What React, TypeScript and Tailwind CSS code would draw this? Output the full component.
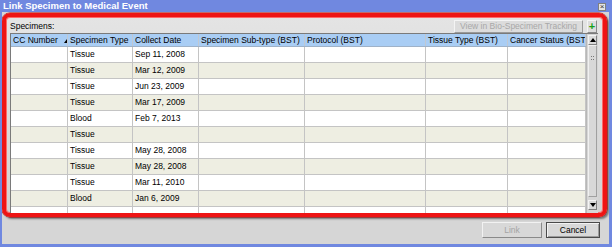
import React from "react";

const rows: [string, string][] = [
  ["Tissue", "Sep 11, 2008"],
  ["Tissue", "Mar 12, 2009"],
  ["Tissue", "Jun 23, 2009"],
  ["Tissue", "Mar 17, 2009"],
  ["Blood", "Feb 7, 2013"],
  ["Tissue", ""],
  ["Tissue", "May 28, 2008"],
  ["Tissue", "May 28, 2008"],
  ["Tissue", "Mar 11, 2010"],
  ["Blood", "Jan 6, 2009"],
  ["", ""],
];

const cols = [
  { name: "CC Number", w: "w-[57px]" },
  { name: "Specimen Type", w: "w-[65px]" },
  { name: "Collect Date", w: "w-[66px]" },
  { name: "Specimen Sub-type (BST)", w: "w-[106px]" },
  { name: "Protocol (BST)", w: "w-[121px]" },
  { name: "Tissue Type (BST)", w: "w-[82px]" },
  { name: "Cancer Status (BST)", w: "w-[78px]" },
];

function Tri({ down = false }: { down?: boolean }) {
  return (
    <svg width="6" height="4" viewBox="0 0 6 4">
      <polygon points={down ? "0,0 6,0 3,4" : "0,4 6,4 3,0"} fill="#000" />
    </svg>
  );
}

export default function App() {
  return (
    <div className="w-[612px] h-[247px] flex flex-col bg-[#d6d6d6] border-l-[2px] border-r-[3px] border-b-[3px] border-[#7088e0] overflow-hidden font-['Liberation_Sans',Arial,sans-serif] text-[8.5px] text-black">
      {/* Title bar */}
      <div className="h-[12px] -ml-[2px] -mr-[3px] bg-[#7088e0] flex items-center justify-between pl-[3px] pr-[6px]">
        <span className="text-white font-bold text-[9.5px] leading-none">Link Specimen to Medical Event</span>
        <span className="w-[8px] h-[8px] mt-[2px] bg-[#e4e4e4] border border-[#808080] flex items-center justify-center text-[8px] leading-none text-[#333]">
          ×
        </span>
      </div>

      {/* Highlighted panel */}
      <div className="mt-[1px] mr-[2px] h-[204px] rounded-[8px] border-[4px] border-[#ee1414] shadow-[0_0_0_0.5px_#b00000,2px_2px_2px_rgba(0,0,0,0.45),inset_0_0_0_1px_#ff6a6a] overflow-hidden bg-gradient-to-b from-[#e4e4e4] to-[#d2d2d2]">
        <div className="h-[16px] flex items-center pl-[4px] pr-[6px]">
          <span className="flex-1 pt-[2px]">Specimens:</span>
          <span className="h-[13px] w-[129px] flex items-center justify-center border border-t-[#f4f4f4] border-l-[#f4f4f4] border-r-[#9a9a9a] border-b-[#9a9a9a] bg-[#dcdcdc] text-[#a8a8a8] mt-[2px]">
            View in Bio-Specimen Tracking
          </span>
          <span className="ml-[4px] h-[13px] w-[10px] flex items-center justify-center border border-t-[#f4f4f4] border-l-[#f4f4f4] border-r-[#8a8a8a] border-b-[#8a8a8a] bg-[#dcdcdc] text-[#16a016] font-bold text-[11px] leading-none mt-[2px]">
            +
          </span>
        </div>

        {/* Table */}
        <div className="ml-[4px] mr-[5px] h-[180px] border-l border-t border-[#7a7a7a] flex overflow-hidden">
          <div className="w-[575px] flex flex-col">
            <div className="h-[13px] flex bg-[#a9cdf4] border-b border-[#9fb2c8] shrink-0">
              {cols.map((c, i) => (
                <div
                  key={c.name}
                  className={`${c.w} shrink-0 border-r border-[#c0c8d2] pl-[2px] flex items-center whitespace-nowrap overflow-hidden`}
                >
                  <span>{c.name}</span>
                  {i === 0 && (
                    <span className="ml-[6px] mt-[1px]">
                      <Tri />
                    </span>
                  )}
                </div>
              ))}
            </div>
            {rows.map((r, ri) => (
              <div
                key={ri}
                className={`h-[16px] flex shrink-0 border-b border-[#c4c4c4] ${ri % 2 === 1 ? "bg-[#eeeee2]" : "bg-white"}`}
              >
                {cols.map((c, ci) => (
                  <div
                    key={c.name}
                    className={`${c.w} shrink-0 border-r border-[#c4c4c4] pl-[2px] flex items-center whitespace-nowrap overflow-hidden`}
                  >
                    {ci === 1 ? r[0] : ci === 2 ? r[1] : ""}
                  </div>
                ))}
              </div>
            ))}
          </div>

          {/* Scrollbar */}
          <div className="w-[12px] flex flex-col bg-[#d6d6d6] border-l border-[#b8b8b8] pt-[1px] pb-[3px]">
            <div className="h-[10px] mx-[1px] flex items-center justify-center border border-t-[#f4f4f4] border-l-[#f4f4f4] border-r-[#808080] border-b-[#808080] bg-[#dadada]">
              <Tri />
            </div>
            <div className="flex-1 flex flex-col">
              <div className="h-[152px] mx-[1px] border border-t-[#f0f0f0] border-l-[#f0f0f0] border-r-[#a0a0a0] border-b-[#a0a0a0] bg-[#d8d8d8] flex justify-center pt-[10px]">
                <div className="grid grid-cols-2 gap-[1px] h-[4px]">
                  <span className="w-[1px] h-[1px] bg-[#777]" />
                  <span className="w-[1px] h-[1px] bg-[#777]" />
                  <span className="w-[1px] h-[1px] bg-[#777]" />
                  <span className="w-[1px] h-[1px] bg-[#777]" />
                </div>
              </div>
            </div>
            <div className="h-[10px] mx-[1px] flex items-center justify-center border border-t-[#f4f4f4] border-l-[#f4f4f4] border-r-[#808080] border-b-[#808080] bg-[#dadada]">
              <Tri down />
            </div>
          </div>
        </div>
      </div>

      {/* Buttons */}
      <div className="mt-[5px] flex justify-end gap-[4px] pr-[9px]">
        <span className="w-[60px] h-[16px] flex items-center justify-center border border-t-[#f2f2f2] border-l-[#f2f2f2] border-r-[#8a8a8a] border-b-[#8a8a8a] bg-[#d8d8d8] text-[#a4a4a4]">
          Link
        </span>
        <span className="w-[54px] h-[16px] flex items-center justify-center border border-[#4a4a4a] bg-[#d8d8d8] shadow-[inset_1px_1px_0_#f2f2f2,inset_-1px_-1px_0_#9a9a9a]">
          Cancel
        </span>
      </div>
    </div>
  );
}
